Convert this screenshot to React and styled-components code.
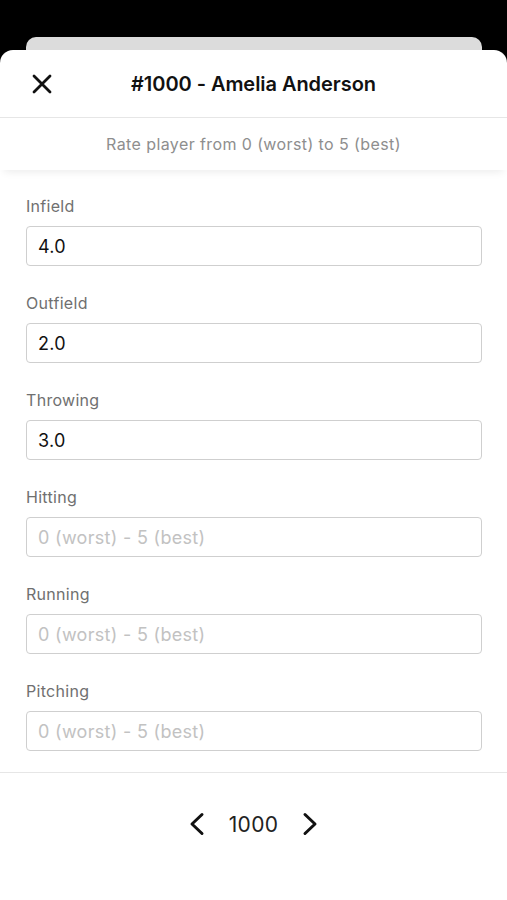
import React from "react";
import styled, { createGlobalStyle } from "styled-components";

const GlobalStyle = createGlobalStyle`
  html, body {
    margin: 0;
    padding: 0;
    background: #000;
    font-family: Inter, "Noto Sans", "Liberation Sans", sans-serif;
  }
  * { box-sizing: border-box; }
`;

const Screen = styled.div`
  padding-top: 37px;
  min-height: 900px;
  background: #000;
  display: flex;
  flex-direction: column;
`;

const BackCard = styled.div`
  height: 13px;
  margin: 0 25px 0 26px;
  background: #dcdcdc;
  border-radius: 10px 10px 0 0;
`;

const Sheet = styled.div`
  flex: 1;
  background: #fff;
  border-radius: 13px 13px 0 0;
  display: flex;
  flex-direction: column;
`;

const Header = styled.div`
  height: 68px;
  display: flex;
  align-items: center;
  justify-content: center;
  position: relative;
  border-bottom: 1px solid #e6e6e6;
`;

const CloseButton = styled.button`
  position: absolute;
  left: 30px;
  top: 50%;
  transform: translateY(-50%);
  background: none;
  border: none;
  padding: 0;
  display: flex;
  color: #111;
`;

const Title = styled.h1`
  margin: 0;
  font-size: 20px;
  font-weight: 600;
  color: #111;
  letter-spacing: -0.05px;
`;

const Subtitle = styled.div`
  height: 52px;
  display: flex;
  align-items: center;
  justify-content: center;
  font-size: 16px;
  letter-spacing: 0.4px;
  color: #8e8e8e;
  box-shadow: 0 6px 8px -4px rgba(0, 0, 0, 0.08);
`;

const Form = styled.div`
  padding: 26px 25px 21px 26px;
  display: flex;
  flex-direction: column;
  gap: 27px;
  border-bottom: 1px solid #e6e6e6;
`;

const Field = styled.label`
  display: flex;
  flex-direction: column;
  gap: 10px;
`;

const Label = styled.span`
  font-size: 16px;
  line-height: 20px;
  letter-spacing: 0.3px;
  color: #707070;
`;

const Input = styled.input`
  height: 40px;
  width: 100%;
  border: 1px solid #cfcfcf;
  border-radius: 4px;
  padding: 0 11px;
  font-family: inherit;
  font-size: 18px;
  letter-spacing: 0.3px;
  color: #111;
  outline: none;
  &::placeholder {
    color: #c2c2c2;
  }
`;

const Footer = styled.div`
  height: 102px;
  display: flex;
  align-items: center;
  justify-content: center;
  gap: 24px;
`;

const Page = styled.span`
  font-size: 21px;
  letter-spacing: 0.3px;
  color: #222;
`;

const Chevron = ({ dir }) => (
  <svg width="16" height="24" viewBox="0 0 16 24" fill="none">
    <path
      d={dir === "left" ? "M13 2.5 L3 12 L13 21.5" : "M3 2.5 L13 12 L3 21.5"}
      stroke="#111"
      strokeWidth="3"
      strokeLinecap="round"
      strokeLinejoin="round"
    />
  </svg>
);

const fields = [
  { name: "Infield", value: "4.0" },
  { name: "Outfield", value: "2.0" },
  { name: "Throwing", value: "3.0" },
  { name: "Hitting", value: "" },
  { name: "Running", value: "" },
  { name: "Pitching", value: "" },
];

export default function App() {
  return (
    <>
      <GlobalStyle />
      <Screen>
        <BackCard />
        <Sheet>
          <Header>
            <CloseButton>
              <svg width="24" height="24" viewBox="0 0 24 24" fill="none">
                <path
                  d="M4 4 L20 20 M20 4 L4 20"
                  stroke="#111"
                  strokeWidth="2.8"
                  strokeLinecap="round"
                />
              </svg>
            </CloseButton>
            <Title>#1000 - Amelia Anderson</Title>
          </Header>
          <Subtitle>Rate player from 0 (worst) to 5 (best)</Subtitle>
          <Form>
            {fields.map((f) => (
              <Field key={f.name}>
                <Label>{f.name}</Label>
                <Input
                  defaultValue={f.value}
                  placeholder="0 (worst) - 5 (best)"
                />
              </Field>
            ))}
          </Form>
          <Footer>
            <Chevron dir="left" />
            <Page>1000</Page>
            <Chevron dir="right" />
          </Footer>
        </Sheet>
      </Screen>
    </>
  );
}
